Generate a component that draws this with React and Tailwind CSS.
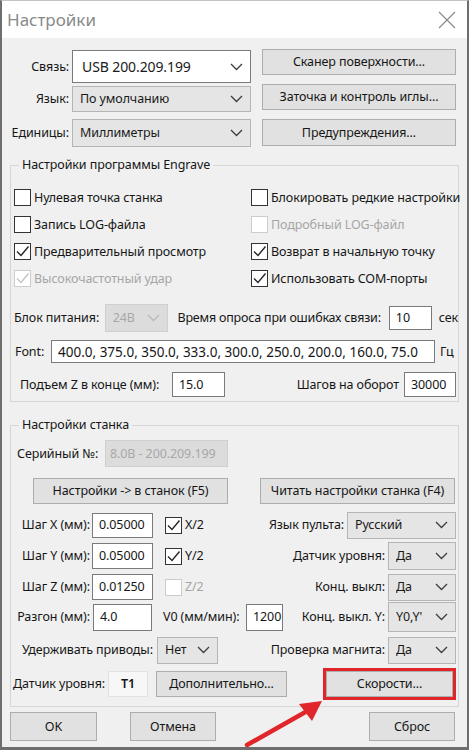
import React from 'react';

const Chevron = ({ disabled }) => (
  <svg width="13" height="8" viewBox="0 0 13 8" className="shrink-0">
    <polyline points="1,1 6.5,6.5 12,1" fill="none" stroke={disabled ? '#b8b8b8' : '#3c3c3c'} strokeWidth="1.3" />
  </svg>
);

const Combo = ({ value, className, white, disabled }) => (
  <div
    className={
      'flex items-center justify-between pl-[7px] pr-[7px] border overflow-hidden ' +
      (white
        ? 'bg-white border-[#7a7a7a] text-[#1a1a1a] '
        : disabled
        ? 'bg-[#dcdcdc] border-[#cfcfcf] text-[#a8a8a8] '
        : 'bg-[#e5e5e5] border-[#b5b5b5] text-[#1a1a1a] ') +
      className
    }
  >
    <span className="whitespace-nowrap overflow-hidden">{value}</span>
    <Chevron disabled={disabled} />
  </div>
);

const Input = ({ value, className }) => (
  <div className={'flex items-center pl-[6px] bg-white border border-[#7a7a7a] whitespace-nowrap overflow-hidden ' + className}>
    {value}
  </div>
);

const Btn = ({ children, className }) => (
  <div className={'flex items-center justify-center bg-[#e1e1e1] border border-[#adadad] whitespace-nowrap ' + className}>
    {children}
  </div>
);

const Check = ({ checked, disabled, label }) => (
  <div className="flex items-center gap-[3px] min-w-0">
    <div
      className={
        'w-[17px] h-[17px] shrink-0 border bg-white flex items-center justify-center ' +
        (disabled ? 'border-[#cccccc]' : 'border-[#333333]')
      }
    >
      {checked && (
        <svg width="15" height="15" viewBox="0 0 15 15">
          <polyline points="2,7.5 6,11.5 13.5,2.5" fill="none" stroke={disabled ? '#c4c4c4' : '#262626'} strokeWidth="1.4" />
        </svg>
      )}
    </div>
    <span className={'whitespace-nowrap ' + (disabled ? 'text-[#a6a6a6]' : '')}>{label}</span>
  </div>
);

export default function App() {
  return (
    <div className="relative w-[469px] h-[750px] flex flex-col bg-[#f0f0f0] border-x-2 border-b-[3px] border-t border-[#6e6e6e] border-t-[#c4c4c4] font-['Noto_Sans',sans-serif] text-[12.5px] tracking-[-0.1px] text-[#161616] leading-[18px]">
      {/* Title bar */}
      <div className="h-[37px] bg-white flex items-center justify-between pl-[5px] pr-[11px]">
        <span className="text-[17px] tracking-normal text-[#8a8a8a]">Настройки</span>
        <svg width="18" height="18" viewBox="0 0 18 18">
          <path d="M1 1 L17 17 M17 1 L1 17" stroke="#8c8c8c" strokeWidth="1.2" />
        </svg>
      </div>

      {/* Top section */}
      <div className="flex pt-[11px]">
        <div className="w-[249px] flex flex-col">
          <div className="mt-[1px] h-[33px] flex items-center">
            <span className="w-[67px] text-right">Связь:</span>
            <Combo white value="USB 200.209.199" className="ml-[3px] w-[179px] h-[33px] pl-[9px] text-[14px]" />
          </div>
          <div className="mt-[3px] h-[26px] flex items-center">
            <span className="w-[67px] text-right">Язык:</span>
            <Combo value="По умолчанию" className="ml-[3px] w-[179px] h-[26px]" />
          </div>
          <div className="mt-[7px] h-[28px] flex items-center">
            <span className="w-[67px] text-right">Единицы:</span>
            <Combo value="Миллиметры" className="ml-[3px] w-[179px] h-[28px]" />
          </div>
        </div>
        <div className="ml-[11px] w-[194px] flex flex-col gap-[9px]">
          <Btn className="h-[26px]">Сканер поверхности...</Btn>
          <Btn className="h-[26px]">Заточка и контроль иглы...</Btn>
          <Btn className="h-[27px]">Предупреждения...</Btn>
        </div>
      </div>

      {/* Engrave settings */}
      <fieldset className="mt-[9px] ml-[8px] w-[449px] min-w-0 border border-[#d6d6d6] pb-[4px]">
        <legend className="ml-[8px] px-[3px] leading-[18px]">Настройки программы Engrave</legend>
        <div className="pt-[10px] pl-[3px] grid grid-cols-[237px_minmax(0,1fr)] auto-rows-[27px] items-center">
          <Check label="Нулевая точка станка" />
          <Check label="Блокировать редкие настройки" />
          <Check label="Запись LOG-файла" />
          <Check disabled label="Подробный LOG-файл" />
          <Check checked label="Предварительный просмотр" />
          <Check checked label="Возврат в начальную точку" />
          <Check checked disabled label="Высокочастотный удар" />
          <Check checked label="Использовать COM-порты" />
        </div>
        <div className="mt-[12px] h-[28px] flex items-center pl-[3px]">
          <span className="w-[91px] whitespace-nowrap">Блок питания:</span>
          <Combo disabled value="24В" className="w-[63px] h-[28px]" />
          <span className="ml-[10px] w-[209px] whitespace-nowrap tracking-[-0.2px]">Время опроса при ошибках связи:</span>
          <Input value="10" className="ml-[3px] w-[43px] h-[24px]" />
          <span className="ml-[7px]">сек</span>
        </div>
        <div className="mt-[8px] h-[23px] flex items-center pl-[4px]">
          <span className="w-[36px]">Font:</span>
          <Input value="400.0, 375.0, 350.0, 333.0, 300.0, 250.0, 200.0, 160.0, 75.0" className="w-[384px] h-[23px] pl-[5px] text-[13.5px] tracking-normal" />
          <span className="ml-[5px]">Гц</span>
        </div>
        <div className="mt-[9px] h-[25px] flex items-center pl-[9px] pr-[2px]">
          <span className="w-[147px] whitespace-nowrap">Подъем Z в конце (мм):</span>
          <Input value="15.0" className="ml-[5px] w-[53px] h-[25px]" />
          <span className="ml-auto whitespace-nowrap">Шагов на оборот</span>
          <Input value="30000" className="ml-[5px] w-[52px] h-[25px] pl-[4px]" />
        </div>
      </fieldset>

      {/* Machine settings */}
      <fieldset className="mt-[14px] ml-[8px] w-[449px] min-w-0 border border-[#d6d6d6] pb-[6px]">
        <legend className="ml-[8px] px-[3px] leading-[18px]">Настройки станка</legend>
        <div className="mt-[6px] h-[27px] flex items-center pl-[6px]">
          <span className="w-[88px] whitespace-nowrap">Серийный №:</span>
          <div className="w-[123px] h-[27px] flex items-center pl-[4px] bg-[#dcdcdc] border border-[#cfcfcf] text-[#a8a8a8] whitespace-nowrap">
            8.0B - 200.209.199
          </div>
        </div>
        <div className="mt-[11px] h-[26px] flex">
          <Btn className="ml-[22px] w-[195px] h-[26px]">Настройки -&gt; в станок (F5)</Btn>
          <Btn className="ml-[32px] w-[195px] h-[26px]">Читать настройки станка (F4)</Btn>
        </div>

        <div className="mt-[6px] h-[30px] flex items-center pr-[2px]">
          <span className="w-[79px] text-right whitespace-nowrap">Шаг X (мм):</span>
          <Input value="0.05000" className="ml-[2px] w-[61px] h-[25px]" />
          <div className="ml-[12px]">
            <Check checked label="X/2" />
          </div>
          <span className="ml-auto whitespace-nowrap">Язык пульта:</span>
          <Combo value="Русский" className="ml-[3px] w-[109px] h-[27px]" />
        </div>
        <div className="h-[32px] flex items-center pr-[2px]">
          <span className="w-[79px] text-right whitespace-nowrap">Шаг Y (мм):</span>
          <Input value="0.05000" className="ml-[2px] w-[61px] h-[26px]" />
          <div className="ml-[12px]">
            <Check checked label="Y/2" />
          </div>
          <span className="ml-auto whitespace-nowrap">Датчик уровня:</span>
          <Combo value="Да" className="ml-[3px] w-[68px] h-[28px]" />
        </div>
        <div className="h-[30px] flex items-center pr-[2px]">
          <span className="w-[79px] text-right whitespace-nowrap">Шаг Z (мм):</span>
          <Input value="0.01250" className="ml-[2px] w-[61px] h-[26px]" />
          <div className="ml-[12px]">
            <Check disabled label="Z/2" />
          </div>
          <span className="ml-auto whitespace-nowrap">Конц. выкл:</span>
          <Combo value="Да" className="ml-[3px] w-[68px] h-[27px]" />
        </div>
        <div className="h-[30px] flex items-center pr-[2px]">
          <span className="w-[79px] text-right whitespace-nowrap">Разгон (мм):</span>
          <Input value="4.0" className="ml-[3px] w-[59px] h-[27px]" />
          <span className="ml-[11px] w-[80px] whitespace-nowrap">V0 (мм/мин):</span>
          <Input value="1200" className="ml-[3px] w-[37px] h-[27px] pl-[3px]" />
          <span className="ml-auto whitespace-nowrap">Конц. выкл. Y:</span>
          <Combo value="Y0,Y'" className="ml-[3px] w-[68px] h-[30px] pl-[5px] pr-[6px]" />
        </div>
        <div className="h-[36px] flex items-center pr-[2px]">
          <span className="w-[142px] text-right whitespace-nowrap">Удерживать приводы:</span>
          <Combo value="Нет" className="ml-[4px] w-[61px] h-[27px]" />
          <span className="ml-auto whitespace-nowrap">Проверка магнита:</span>
          <Combo value="Да" className="ml-[3px] w-[68px] h-[27px]" />
        </div>
        <div className="h-[32px] flex items-center pr-[2px]">
          <span className="w-[94px] text-right whitespace-nowrap">Датчик уровня:</span>
          <div className="ml-[3px] w-[40px] h-[26px] flex items-center justify-center bg-[#f7f7f7] border border-[#e2e2e2] font-semibold">
            T1
          </div>
          <Btn className="ml-[8px] w-[131px] h-[26px]">Дополнительно...</Btn>
          <div className="ml-auto w-[133px] h-[32px] border-[3px] border-[#e1262b] flex">
            <Btn className="flex-1">Скорости...</Btn>
          </div>
        </div>
      </fieldset>

      {/* Dialog buttons */}
      <div className="mt-[5px] h-[29px] flex">
        <Btn className="ml-[8px] w-[87px] h-[29px]">OK</Btn>
        <Btn className="ml-[33px] w-[86px] h-[29px]">Отмена</Btn>
        <Btn className="ml-auto mr-[12px] w-[86px] h-[29px]">Сброс</Btn>
      </div>

      {/* Red annotation arrow */}
      <svg className="absolute left-[-2px] top-[-1px] pointer-events-none" width="469" height="750" viewBox="0 0 469 750">
        <line x1="247" y1="745" x2="309" y2="710" stroke="#e1262b" strokeWidth="4.5" strokeLinecap="round" />
        <polygon points="322,701 299,704 312,721" fill="#e1262b" />
      </svg>
    </div>
  );
}
